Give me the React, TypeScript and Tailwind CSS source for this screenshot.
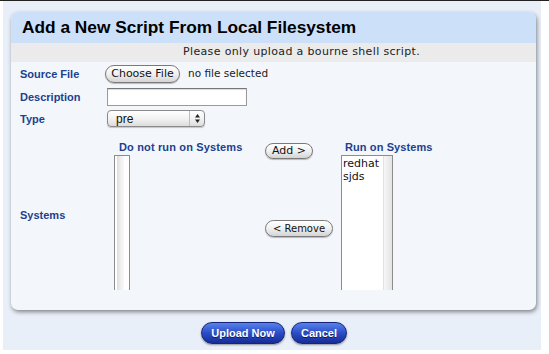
import React from "react";

const LS = { fontFamily: '"Liberation Sans", Arial, sans-serif' };
const DV = { fontFamily: '"DejaVu Sans", Verdana, sans-serif' };

function Label({ children }: { children: React.ReactNode }) {
  return (
    <div className="w-[94px] pl-[9px] text-[11px] font-bold text-[#223f8c] leading-[14px]" style={LS}>
      {children}
    </div>
  );
}

function AquaButton({ children, className = "" }: { children: React.ReactNode; className?: string }) {
  return (
    <div
      className={`flex items-center justify-center rounded-full border border-[#7a7a7a] bg-gradient-to-b from-[#ffffff] via-[#f0f0f0] to-[#d4d4d4] text-[#111] shadow-[0_1px_1px_rgba(0,0,0,0.25)] ${className}`}
      style={DV}
    >
      {children}
    </div>
  );
}

function BlueButton({ children, className = "" }: { children: React.ReactNode; className?: string }) {
  return (
    <div
      className={`flex h-[22px] items-center justify-center rounded-[11px] border border-[#16257a] bg-gradient-to-b from-[#5a82ea] via-[#2a4dc8] to-[#182c95] text-[11px] font-bold text-white shadow-[0_1px_2px_rgba(0,0,0,0.4)] [text-shadow:0_1px_0_rgba(0,0,40,0.6)] ${className}`}
      style={LS}
    >
      {children}
    </div>
  );
}

export default function App() {
  return (
    <div className="w-[549px] h-[354px] bg-white overflow-hidden">
      <div className="h-px w-full bg-[#222]" />
      <div className="ml-[3px] flex h-[349px] w-[538px] flex-col bg-[#e9eff8] pl-[8px] pt-[11px]">
        {/* Panel */}
        <div className="flex h-[298px] w-[525px] flex-col rounded-[7px] bg-[#f3f7fc] shadow-[1px_2px_4px_rgba(0,0,0,0.45)]">
          <div className="flex h-[31px] items-center rounded-t-[7px] bg-[#cde0f9] pl-[11px] pt-[1px]">
            <span className="text-[17.3px] font-bold text-black" style={LS}>
              Add a New Script From Local Filesystem
            </span>
          </div>
          <div className="flex h-[19px] items-center justify-center bg-[#ebebeb] pl-[56px]">
            <span className="text-[11px] tracking-[0.35px] text-[#222]" style={DV}>
              Please only upload a bourne shell script.
            </span>
          </div>

          {/* Source File */}
          <div className="mt-[3px] flex h-[18px] items-center">
            <Label>Source File</Label>
            <AquaButton className="h-[18px] w-[75px] text-[11px]">Choose File</AquaButton>
            <span className="ml-[8px] text-[10.5px] text-[#222]" style={DV}>
              no file selected
            </span>
          </div>

          {/* Description */}
          <div className="mt-[5px] flex h-[18px] items-center">
            <Label>Description</Label>
            <div className="ml-[2px] h-[18px] w-[140px] border border-[#9a9a9a] border-t-[#777] bg-white shadow-[inset_0_1px_1px_rgba(0,0,0,0.15)]" />
          </div>

          {/* Type */}
          <div className="mt-[4px] flex h-[17px] items-center">
            <Label>Type</Label>
            <div
              className="ml-[2px] flex h-[17px] w-[98px] items-center rounded-[4px] border border-[#8a8a8a] bg-gradient-to-b from-[#ffffff] via-[#f2f2f2] to-[#dcdcdc] shadow-[0_1px_1px_rgba(0,0,0,0.2)]"
              style={LS}
            >
              <span className="flex-1 pl-[8px] text-[12px] leading-[14px] text-[#111]">pre</span>
              <div className="flex h-full w-[15px] flex-col items-center justify-center border-l border-[#bdbdbd]">
                <svg width="7" height="11" viewBox="0 0 7 11">
                  <path d="M3.5 1 L6 4.5 H1 Z" fill="#222" />
                  <path d="M3.5 10 L6 6.5 H1 Z" fill="#222" />
                </svg>
              </div>
            </div>
          </div>

          {/* Systems */}
          <div className="mt-[13px] flex h-[150px] items-center">
            <Label>Systems</Label>
            <div className="flex h-full items-start">
              {/* Column A */}
              <div className="ml-[9px] flex h-full w-[151px] flex-col">
                <div
                  className="h-[15px] pl-[5px] pt-[1px] text-[11px] font-bold leading-[12px] tracking-[0.15px] text-[#223f8c]"
                  style={LS}
                >
                  Do not run on Systems
                </div>
                <div className="flex h-[135px] w-[16px] border-x border-t border-[#8c8c8c] bg-white">
                  <div className="ml-[2px] h-full w-[7px] bg-gradient-to-r from-[#dcdcdc] via-[#efefef] to-[#f8f8f8]" />
                </div>
              </div>
              {/* Column B */}
              <div className="flex w-[68px] flex-col">
                <AquaButton className="mt-[3px] h-[16px] w-[48px] text-[11px]">Add &gt;</AquaButton>
                <AquaButton className="mt-[61px] h-[17px] w-[68px] text-[10px]">&lt; Remove</AquaButton>
              </div>
              {/* Column C */}
              <div className="ml-[8px] flex h-full flex-col">
                <div
                  className="h-[15px] pl-[4px] pt-[1px] text-[11px] font-bold leading-[12px] tracking-[0.1px] text-[#223f8c]"
                  style={LS}
                >
                  Run on Systems
                </div>
                <div className="flex h-[135px] w-[52px] border-x border-t border-[#8c8c8c] bg-white">
                  <div className="flex-1 pl-[1px] pt-[1px] text-[11px] leading-[13px] text-[#111]" style={DV}>
                    <div>redhat</div>
                    <div>sjds</div>
                  </div>
                  <div className="h-full w-[9px] border-l border-[#e2e2e2] bg-gradient-to-r from-[#f6f6f6] to-[#e4e4e4]" />
                </div>
              </div>
            </div>
          </div>
        </div>

        {/* Bottom buttons */}
        <div className="mt-[12px] flex w-[525px] justify-center gap-[6px] pl-[1px]">
          <BlueButton className="w-[84px]">Upload Now</BlueButton>
          <BlueButton className="w-[56px]">Cancel</BlueButton>
        </div>
      </div>
    </div>
  );
}
